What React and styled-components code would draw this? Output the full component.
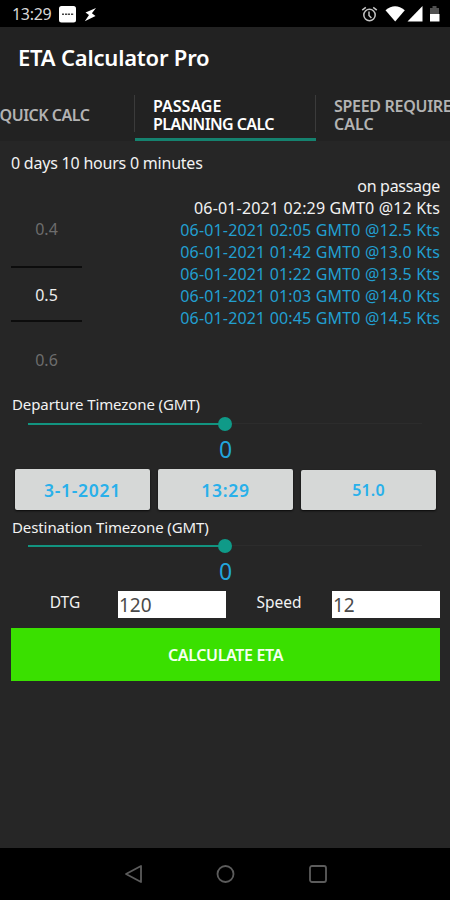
import React, { Component } from 'react'
import styled, { createGlobalStyle } from 'styled-components'

const GlobalStyle = createGlobalStyle`
  * {
    box-sizing: border-box;
  }
  body {
    margin: 0;
    background: #000;
  }
`

const Screen = styled.div`
  display: flex;
  flex-direction: column;
  width: 450px;
  height: 900px;
  overflow: hidden;
  background: #262626;
  color: #f2f2f2;
  font-family: 'Noto Sans', 'Open Sans', sans-serif;
  font-size: 16px;
  line-height: 22px;
  white-space: nowrap;
`

const StatusBar = styled.div`
  display: flex;
  flex: none;
  align-items: center;
  height: 27px;
  padding: 0 9px 0 12px;
  background: #000;
`

const Clock = styled.span`
  width: 47px;
  color: #d8d8d8;
  font-size: 16px;
  letter-spacing: -0.3px;
`

const StatusIcons = styled.div`
  display: flex;
  align-items: center;
  gap: 7px;
  margin-left: auto;
`

const Header = styled.header`
  flex: none;
  height: 63px;
  padding-left: 18px;
  background: #222;
  color: #fff;
  font-size: 22px;
  font-weight: 600;
  line-height: 60px;
  letter-spacing: -0.2px;
`

const Tabs = styled.nav`
  display: flex;
  flex: none;
  width: 543px;
  height: 51px;
  margin-left: -46px;
  background: #222;
`

const Tab = styled.div`
  display: flex;
  flex: none;
  flex-direction: column;
  align-items: ${props => (props.$centered ? 'center' : 'flex-start')};
  justify-content: center;
  width: 181px;
  padding: 2px ${props => (props.$centered ? 0 : 18)}px 0;
  border-bottom: 3px solid ${props => (props.$active ? '#15826f' : 'transparent')};
  color: ${props => (props.$active ? '#fff' : '#b3b3b3')};
  font-weight: 600;
  line-height: 18px;
`

const TabLine = styled.span`
  letter-spacing: ${props => props.$spacing || 0}px;
`

const TabDivider = styled.div`
  flex: none;
  width: 1px;
  height: 37px;
  margin: 5px 0 0 -1px;
  background: #3b3b3b;
`

const Content = styled.main`
  flex: 1;
  padding: 11px 10px 0 11px;
`

const Duration = styled.div`
  letter-spacing: -0.22px;
`

const Results = styled.div`
  display: flex;
  justify-content: space-between;
  height: 219px;
`

const Picker = styled.div`
  width: 71px;
  padding-top: 26px;
  text-align: center;
`

const PickerValue = styled.div`
  height: 66px;
  line-height: 58px;
  color: #6d6d6d;
  &:last-child {
    line-height: 77px;
  }
`

const PickerSelected = styled.div`
  height: 56px;
  border: solid #0c0c0c;
  border-width: 2px 0;
  color: #ededed;
  line-height: 54px;
`

const EtaList = styled.div`
  padding-top: 1px;
  text-align: right;
`

const EtaRow = styled.div`
  color: ${props => (props.$alt ? '#229fd0' : '#f2f2f2')};
  letter-spacing: ${props => (props.$tight ? -0.3 : 0.16)}px;
`

const FieldLabel = styled.div`
  height: ${props => props.$height}px;
  margin-left: 1px;
  font-size: 15px;
  letter-spacing: -0.1px;
`

const Slider = styled.div`
  display: flex;
  align-items: center;
  height: 15px;
  padding: 0 18px 0 17px;
`

const Track = styled.div`
  flex: 1;
  height: ${props => (props.$filled ? 2 : 1)}px;
  background: ${props => (props.$filled ? '#129480' : '#2c2c2c')};
`

const Thumb = styled.div`
  width: 14px;
  height: 14px;
  margin: 0 -7px;
  border-radius: 50%;
  background: #0f9a88;
  z-index: 1;
`

const SliderValue = styled.div`
  height: 36px;
  color: #22a5dc;
  font-size: 23px;
  line-height: 36px;
  text-align: center;
`

const Buttons = styled.div`
  display: grid;
  grid-template-columns: repeat(3, 135px);
  gap: 8px;
  height: 49px;
  padding-left: 4px;
`

const PickButton = styled.button`
  height: ${props => (props.$small ? 40 : 41)}px;
  margin-top: ${props => (props.$small ? 3 : 2)}px;
  padding: 0;
  border: 0;
  border-radius: 2px;
  background: #d6d8d7;
  box-shadow: 0 1px 2px #0a0a0a;
  color: #29b0ea;
  font-family: inherit;
  font-size: ${props => (props.$small ? 16 : 17.5)}px;
  font-weight: 600;
  letter-spacing: ${props => (props.$small ? 0.2 : 0.7)}px;
`

const Fields = styled.div`
  display: grid;
  grid-template-columns: 107px 107px 107px 108px;
  height: 39px;
  padding-top: 2px;
`

const InputLabel = styled.label`
  padding-left: 1px;
  text-align: center;
  font-size: 15.5px;
  line-height: 22px;
`

const NumberInput = styled.input`
  width: 108px;
  height: 27px;
  padding: 1px 0 0 1px;
  border: 0;
  border-radius: 0;
  background: #fff;
  color: #4a4a4a;
  font-family: inherit;
  font-size: 19px;
`

const CalculateButton = styled.button`
  width: 429px;
  height: 53px;
  border: 0;
  padding: 0;
  background: #3ae000;
  color: #f4fff0;
  font-family: inherit;
  font-size: 16px;
  font-weight: 600;
  letter-spacing: -0.35px;
`

const NavBar = styled.footer`
  display: flex;
  flex: none;
  justify-content: center;
  align-items: center;
  gap: 72px;
  height: 52px;
  padding-left: 1px;
  background: #000;
`

const etas = [
  '06-01-2021 02:05 GMT0 @12.5 Kts',
  '06-01-2021 01:42 GMT0 @13.0 Kts',
  '06-01-2021 01:22 GMT0 @13.5 Kts',
  '06-01-2021 01:03 GMT0 @14.0 Kts',
  '06-01-2021 00:45 GMT0 @14.5 Kts'
]

const NotificationIcons = () => (
  <svg width='40' height='20' viewBox='0 0 40 20'>
    <rect x='0' y='2' width='17' height='16.5' rx='2.5' fill='#fff' />
    <path d='M3 9.5h2v1.5h-2zM6 9.5h2.3v1.5H6zM9 9.5h2v1.5H9zM12 9.5h2.2v1.5H12z' fill='#444' />
    <path d='M37 4L26.5 8.5l3.5 2.6-4.2 6.2L36.5 12l-3.6-2.8z' fill='#fff' />
  </svg>
)

const AlarmIcon = () => (
  <svg width='17' height='18' viewBox='0 0 17 18' fill='none' stroke='#c4c4c4' strokeWidth='1.5'>
    <circle cx='8.5' cy='10' r='5.7' />
    <path d='M8 6.5v4l2.4 2.6M1.2 5.1L4.8 2.3M15.8 5.1l-3.6-2.8' />
  </svg>
)

const SignalIcons = () => (
  <svg width='56' height='20' viewBox='0 0 56 20'>
    <path d='M.5 6.2Q10 -1.8 19.8 6.2L10.2 17.5z' fill='#fff' />
    <path d='M37.5 2v15.5H22.5z' fill='#fff' />
    <path d='M45 4h2.5V2h4v2H54v6h-9z' fill='#505050' />
    <path d='M45 10h9.5v7.5H45z' fill='#fff' />
  </svg>
)

const TimezoneSlider = () => (
  <>
    <Slider>
      <Track $filled />
      <Thumb />
      <Track />
    </Slider>
    <SliderValue>0</SliderValue>
  </>
)

class App extends Component {
  render() {
    return (
      <Screen>
        <GlobalStyle />
        <StatusBar>
          <Clock>13:29</Clock>
          <NotificationIcons />
          <StatusIcons>
            <AlarmIcon />
            <SignalIcons />
          </StatusIcons>
        </StatusBar>
        <Header>ETA Calculator Pro</Header>
        <Tabs>
          <Tab $centered>
            <TabLine $spacing={-0.5}>QUICK CALC</TabLine>
          </Tab>
          <TabDivider />
          <Tab $active>
            <TabLine>PASSAGE</TabLine>
            <TabLine $spacing={-0.6}>PLANNING CALC</TabLine>
          </Tab>
          <TabDivider />
          <Tab>
            <TabLine $spacing={-0.3}>SPEED REQUIRE</TabLine>
            <TabLine>CALC</TabLine>
          </Tab>
        </Tabs>
        <Content>
          <Duration>0 days 10 hours 0 minutes</Duration>
          <Results>
            <Picker>
              <PickerValue>0.4</PickerValue>
              <PickerSelected>0.5</PickerSelected>
              <PickerValue>0.6</PickerValue>
            </Picker>
            <EtaList>
              <EtaRow $tight>on passage</EtaRow>
              <EtaRow>06-01-2021 02:29 GMT0 @12 Kts</EtaRow>
              {etas.map(eta => <EtaRow $alt key={eta}>{eta}</EtaRow>)}
            </EtaList>
          </Results>
          <FieldLabel $height={23}>Departure Timezone (GMT)</FieldLabel>
          <TimezoneSlider />
          <Buttons>
            <PickButton>3-1-2021</PickButton>
            <PickButton>13:29</PickButton>
            <PickButton $small>51.0</PickButton>
          </Buttons>
          <FieldLabel $height={22}>Destination Timezone (GMT)</FieldLabel>
          <TimezoneSlider />
          <Fields>
            <InputLabel>DTG</InputLabel>
            <NumberInput defaultValue='120' />
            <InputLabel>Speed</InputLabel>
            <NumberInput defaultValue='12' />
          </Fields>
          <CalculateButton>CALCULATE ETA</CalculateButton>
        </Content>
        <NavBar>
          <svg width='20' height='20' viewBox='0 0 20 20' fill='none' stroke='#5c5c5c' strokeWidth='1.8' strokeLinejoin='round'>
            <path d='M17 2v16L2 10z' />
          </svg>
          <svg width='20' height='20' viewBox='0 0 20 20' fill='none' stroke='#5c5c5c' strokeWidth='1.8'>
            <circle cx='9.5' cy='10' r='8' />
          </svg>
          <svg width='20' height='20' viewBox='0 0 20 20' fill='none' stroke='#5c5c5c' strokeWidth='1.8'>
            <rect x='2' y='2' width='16' height='16' rx='2' />
          </svg>
        </NavBar>
      </Screen>
    )
  }
}

export default App
